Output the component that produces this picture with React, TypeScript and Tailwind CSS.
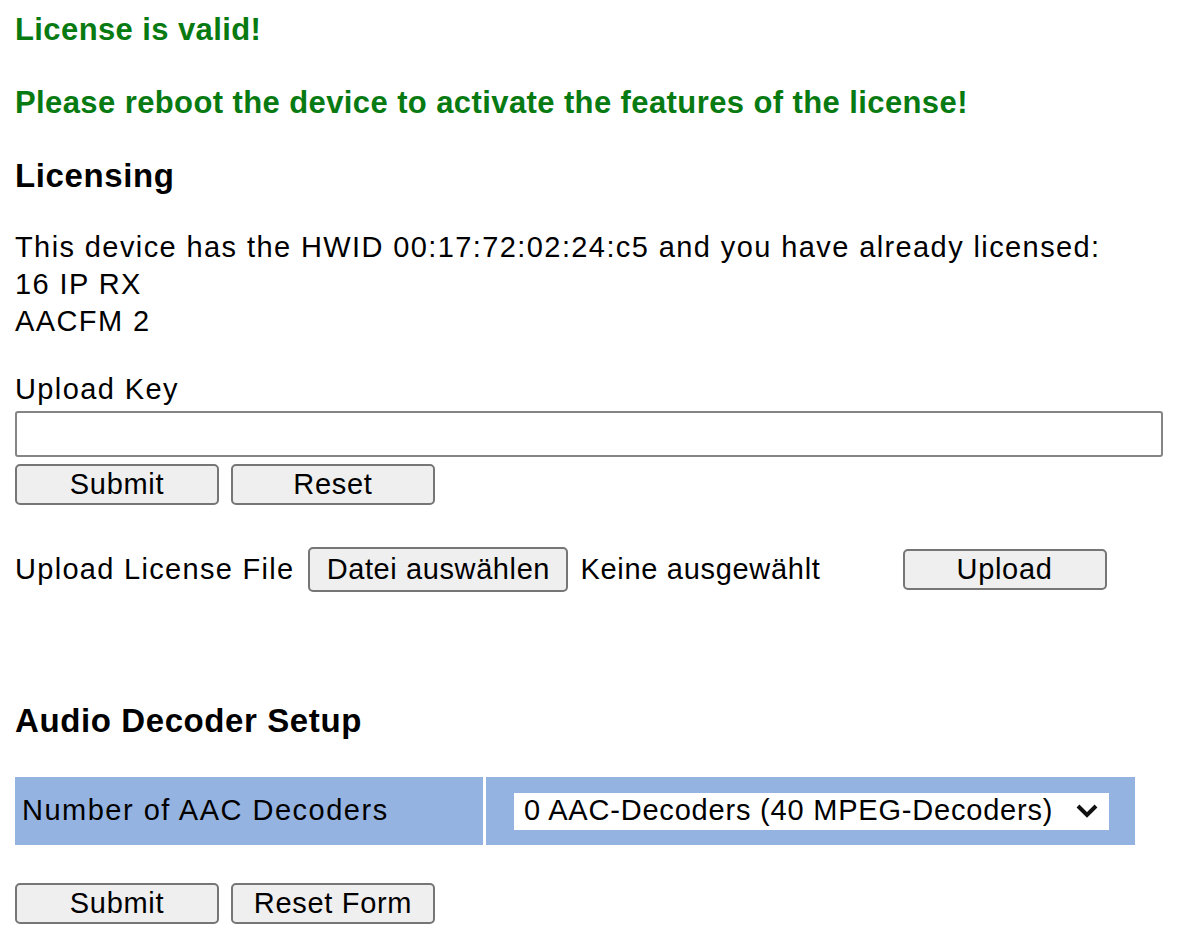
const FONT = "font-['Liberation_Sans',Arial,sans-serif]";

function GrayButton({ label, className = "" }: { label: string; className?: string }) {
  return (
    <button
      type="button"
      className={`h-[41px] w-[204px] rounded-[5px] border-2 border-[#767676] bg-[#efefef] text-[29px] leading-none tracking-[0.7px] text-black ${className}`}
    >
      {label}
    </button>
  );
}

export default function App() {
  return (
    <div className={`${FONT} min-h-[943px] w-[1200px] bg-white pl-[15px] pt-[11px] text-black`}>
      <div className="h-[37px] text-[31px] font-bold leading-[37px] tracking-[0.4px] text-[#087a12]">License is valid!</div>
      <div className="mt-[36px] h-[37px] text-[31px] font-bold leading-[37px] tracking-[0.4px] text-[#087a12]">
        Please reboot the device to activate the features of the license!
      </div>

      <div className="mt-[36px] h-[37px] text-[33px] font-bold leading-[37px] tracking-[0.6px]">Licensing</div>

      <div className="mt-[35px] text-[29px] leading-[37px] tracking-[1.4px]">
        <div>This device has the HWID 00:17:72:02:24:c5 and you have already licensed:</div>
        <div>16 IP RX</div>
        <div>AACFM 2</div>
      </div>

      <div className="mt-[31px] text-[29px] leading-[37px] tracking-[1.4px]">Upload Key</div>
      <input
        type="text"
        className="mt-[3px] block h-[46px] w-[1148px] rounded-[3px] border-2 border-[#858585] bg-white"
      />
      <div className="mt-[7px] flex gap-[12px]">
        <GrayButton label="Submit" />
        <GrayButton label="Reset" />
      </div>

      <div className="mt-[42px] flex h-[45px] items-center text-[29px]">
        <span className="tracking-[1.3px]">Upload License File</span>
        <button
          type="button"
          className="ml-[14px] h-[45px] w-[260px] rounded-[5px] border-2 border-[#767676] bg-[#efefef] text-[29px] leading-none tracking-[0.6px]"
        >
          Datei auswählen
        </button>
        <span className="ml-[12px] tracking-[0.7px]">Keine ausgewählt</span>
        <GrayButton label="Upload" className="ml-[82px]" />
      </div>

      <div className="mt-[110px] h-[37px] text-[33px] font-bold leading-[37px] tracking-[0.6px]">Audio Decoder Setup</div>

      <div className="mt-[38px] flex h-[68px] w-[1120px] gap-[3px]">
        <div className="flex w-[468px] items-center bg-[#95b3e0] pl-[7px] text-[29px] tracking-[1.5px]">
          Number of AAC Decoders
        </div>
        <div className="flex flex-1 items-center bg-[#95b3e0] pl-[28px]">
          <div className="flex h-[37px] w-[595px] items-center justify-between bg-white pl-[10px] pr-[10px] text-[29px] tracking-[0.8px]">
            <span>0 AAC-Decoders (40 MPEG-Decoders)</span>
            <svg width="24" height="16" viewBox="0 0 24 16">
              <path d="M3 3 L12 12 L21 3" fill="none" stroke="#111" strokeWidth="4" />
            </svg>
          </div>
        </div>
      </div>

      <div className="mt-[38px] flex gap-[12px]">
        <GrayButton label="Submit" />
        <GrayButton label="Reset Form" />
      </div>
    </div>
  );
}
